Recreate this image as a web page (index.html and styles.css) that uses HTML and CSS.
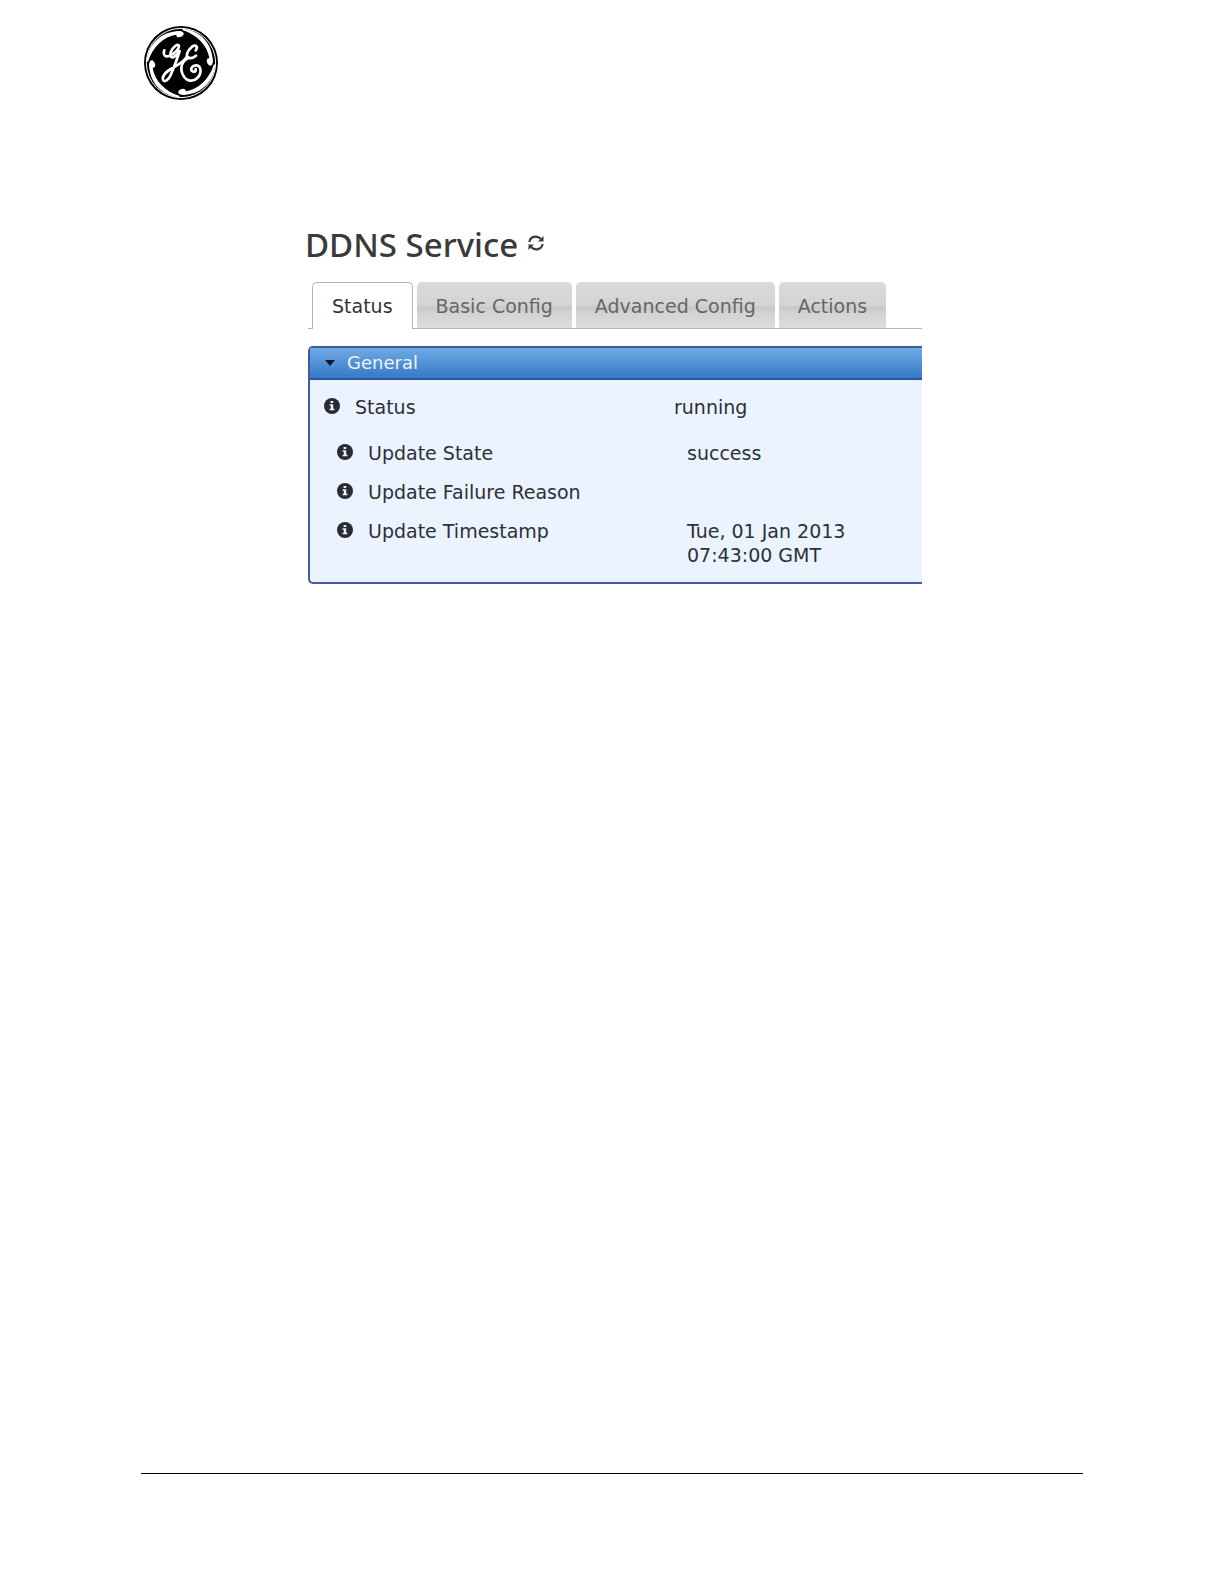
FILE: index.html
```html
<!DOCTYPE html>
<html lang="en">
<head>
<meta charset="utf-8">
<meta name="viewport" content="width=device-width, initial-scale=1">
<title>DDNS Service</title>
<link rel="stylesheet" href="styles.css">
</head>
<body>
<svg class="defs" aria-hidden="true">
  <symbol id="info" viewBox="0 0 16 16">
    <circle cx="8" cy="8" r="8" fill="#292c33"/>
    <path fill="#edf3fd" d="M6.6 3h2.6v2H6.6zM5.6 6.3h3.6v4.5h1.2v1.5H5.6v-1.5h1.2v-3H5.6z"/>
  </symbol>
</svg>
<div class="page">
  <header class="page-header">
    <svg class="logo" viewBox="24 24 222 222" role="img" aria-label="GE">
      <circle cx="135" cy="135" r="111" fill="#000"/>
      <circle cx="135" cy="135" r="104" fill="none" stroke="#fff" stroke-width="3"/>
      <g fill="#fff">
        <path id="swirl" d="M32 130C36 84 69 45 120 40C136 37 147 43 142 51C135 60 119 60 121 50C84 55 50 86 36 131Z"/>
        <use href="#swirl" transform="rotate(90 135 135)"/>
        <use href="#swirl" transform="rotate(180 135 135)"/>
        <use href="#swirl" transform="rotate(270 135 135)"/>
      </g>
      <g fill="none" stroke="#fff" stroke-width="8" stroke-linecap="round" stroke-linejoin="round">
        <path d="M85 97C80 110 88 118 99 114C115 108 133 89 128 82C118 75 99 104 104 115C109 124 123 111 131 99C122 127 113 151 104 171C98 186 85 195 81 185C77 173 96 157 114 147C134 137 145 127 152 117"/>
        <path d="M179 97C187 87 180 78 168 86C154 98 147 115 158 119C165 122 174 118 180 113M159 119C135 128 131 154 142 173C151 190 171 193 184 180C199 165 195 143 181 142C169 141 162 153 168 159C174 164 181 160 179 153"/>
      </g>
    </svg>
  </header>
  <main class="service">
    <div class="title-row">
      <h1 class="title">DDNS Service</h1>
      <button class="refresh" type="button" aria-label="Refresh">
        <svg class="refresh-icon" viewBox="0 0 16 16" aria-hidden="true">
          <g fill="none" stroke="#3a3a3a" stroke-width="2.2">
            <path d="M1.500 7C2 1.500 9 0 13 4M14.500 9C14 14.500 7 16 3 12"/>
          </g>
          <path fill="#3a3a3a" d="M15.500 1v5.500H10zM.5 15V9.500H6z"/>
        </svg>
      </button>
    </div>
    <div class="tabs" role="tablist">
      <button class="tab tab-active" type="button" role="tab" aria-selected="true">Status</button>
      <button class="tab" type="button" role="tab" aria-selected="false">Basic Config</button>
      <button class="tab" type="button" role="tab" aria-selected="false">Advanced Config</button>
      <button class="tab" type="button" role="tab" aria-selected="false">Actions</button>
    </div>
    <section class="panel">
      <h2 class="panel-heading">
        <button class="panel-toggle" type="button" aria-expanded="true">
          <svg class="caret" viewBox="0 0 10 6" aria-hidden="true"><path fill="#101820" d="M0 0h10L5 6z"/></svg>
          General
        </button>
      </h2>
      <dl class="fields">
        <div class="field">
          <dt class="label"><svg class="info" aria-hidden="true"><use href="#info"/></svg>Status</dt>
          <dd class="value">running</dd>
        </div>
        <div class="field field-nested">
          <dt class="label"><svg class="info" aria-hidden="true"><use href="#info"/></svg>Update State</dt>
          <dd class="value">success</dd>
        </div>
        <div class="field field-nested">
          <dt class="label"><svg class="info" aria-hidden="true"><use href="#info"/></svg>Update Failure Reason</dt>
          <dd class="value"></dd>
        </div>
        <div class="field field-nested">
          <dt class="label"><svg class="info" aria-hidden="true"><use href="#info"/></svg>Update Timestamp</dt>
          <dd class="value">Tue, 01 Jan 2013 07:43:00 GMT</dd>
        </div>
      </dl>
    </section>
  </main>
  <footer class="page-footer"></footer>
</div>
</body>
</html>
```
FILE: styles.css
```css
* { box-sizing: border-box; }

body {
  margin: 0;
  background: #fff;
  color: #2d3038;
  font-family: "DejaVu Sans", Verdana, sans-serif;
  font-size: 19px;
  line-height: 24px;
}

button {
  margin: 0;
  border: 0;
  background: none;
  font: inherit;
  cursor: pointer;
}

.defs { display: none; }

.page {
  display: flex;
  flex-direction: column;
  min-height: 100vh;
  padding: 26px 141px 0;
}

.page-header { padding-left: 3px; }

.logo {
  display: block;
  width: 74px;
  height: 74px;
}

.service { margin: 125px 161px 48px 167px; }

.title-row {
  display: flex;
  align-items: flex-start;
  gap: 10px;
  margin-left: -3px;
}

.title {
  margin: 0;
  color: #3a3a3a;
  font-family: "Noto Sans", sans-serif;
  font-size: 33px;
  font-weight: 500;
  line-height: 40px;
}

.refresh { padding: 10px 0; }

.refresh-icon {
  display: block;
  width: 16px;
  height: 16px;
}

.tabs {
  display: flex;
  gap: 4px;
  margin-top: 17px;
  padding-left: 4px;
  border-bottom: 1px solid #b4b4b4;
}

.tab {
  height: 46px;
  padding: 2px 19px 0;
  border-radius: 5px 5px 0 0;
  background: linear-gradient(#dadada, #d4d4d4 50%, #c8c8c8 56%, #d2d2d2 66%, #dcdcdc);
  color: #666;
}

.tab-active {
  margin-bottom: -1px;
  height: 47px;
  padding-top: 0;
  border: 1px solid #b4b4b4;
  border-bottom: 0;
  background: #fff;
  color: #333;
}

.panel {
  margin-top: 17px;
  border: 2px solid #4659a0;
  border-right: 0;
  border-radius: 5px 0 0 5px;
  background: #ebf3fe;
}

.panel-heading {
  margin: 0;
  border-bottom: 2px solid #2857a5;
  background: linear-gradient(#70aae4, #3579c6);
  font-size: 18px;
  font-weight: 400;
}

.panel-toggle {
  display: flex;
  align-items: center;
  gap: 12px;
  width: 100%;
  height: 30px;
  padding: 0 15px;
  color: #edf5ff;
}

.caret {
  width: 10px;
  height: 6px;
}

.fields {
  margin: 0;
  padding: 15px 14px;
}

.field {
  display: grid;
  grid-template-columns: 350px 180px;
  margin-bottom: 22px;
}

.field-nested {
  margin: 0 0 15px 13px;
}

.field:last-child { margin-bottom: 0; }

.label {
  display: flex;
  align-items: flex-start;
  gap: 15px;
}

.info {
  width: 16px;
  height: 16px;
  margin-top: 3px;
}

.value { margin: 0; }

.page-footer {
  height: 111px;
  margin-top: auto;
  border-top: 1px solid #000;
}
```
